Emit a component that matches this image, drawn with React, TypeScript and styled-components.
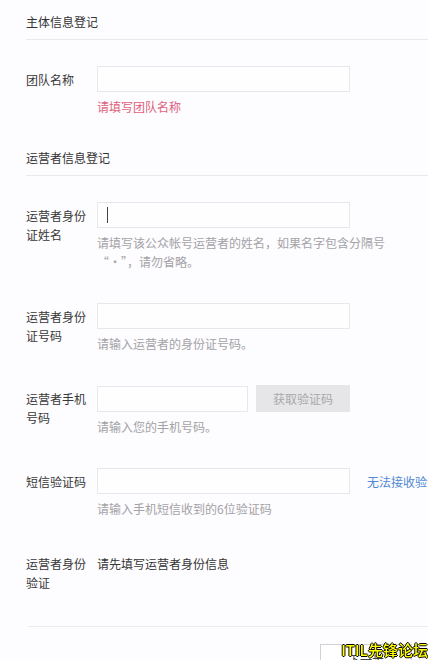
import React from "react";
import styled, { createGlobalStyle } from "styled-components";

const Global = createGlobalStyle`
  html, body {
    margin: 0;
    padding: 0;
    background: #fdfcfe;
    overflow: hidden;
  }
  body {
    font-family: "Noto Sans CJK SC", "Noto Sans", sans-serif;
    font-size: 12px;
    color: #353535;
  }
`;

const Page = styled.div`
  width: 428px;
  padding: 12px 0 0 26px;
  box-sizing: border-box;
`;

const Section = styled.section<{ $gap?: number }>`
  margin-top: ${(p) => p.$gap ?? 0}px;
`;

const Heading = styled.div`
  line-height: 20px;
  padding-bottom: 7px;
  border-bottom: 1px solid #e9e8ec;
  color: #333;
  margin-right: -30px;
`;

const Rows = styled.div`
  display: flex;
  flex-direction: column;
  gap: 32px;
  padding-top: 26px;
`;

const Row = styled.div`
  display: flex;
  align-items: flex-start;
`;

const Label = styled.div`
  flex: 0 0 62px;
  margin-right: 9px;
  line-height: 19px;
  padding-top: 3.5px;
  color: #383838;
`;

const Field = styled.div`
  display: flex;
  flex-direction: column;
`;

const Controls = styled.div`
  display: flex;
  align-items: center;
  white-space: nowrap;
`;

const InputBox = styled.div<{ $w?: number }>`
  box-sizing: border-box;
  width: ${(p) => p.$w ?? 253}px;
  height: 26px;
  border: 1px solid #e8e7ec;
  background: #fefefe;
  display: flex;
  align-items: center;
  padding: 0 9px;
`;

const Caret = styled.span`
  display: block;
  width: 1px;
  height: 16px;
  background: #444;
`;

const CodeButton = styled.div`
  box-sizing: border-box;
  width: 94px;
  height: 27px;
  margin-left: 8px;
  background: #e6e5e8;
  color: #a9a9ab;
  display: flex;
  align-items: center;
  justify-content: center;
`;

const Link = styled.span`
  margin-left: 17px;
  color: #5089d5;
`;

const Hint = styled.div<{ $error?: boolean }>`
  margin-top: 5px;
  max-width: 290px;
  line-height: 19px;
  color: ${(p) => (p.$error ? "#e0617c" : "#a3a2a6")};
`;

const Value = styled.div`
  line-height: 19px;
  padding-top: 3.5px;
  color: #353535;
`;

const Divider = styled.div`
  margin-top: 34px;
  margin-left: 2px;
  margin-right: -30px;
  border-top: 1px solid #ebeaee;
`;

const Footer = styled.div`
  display: flex;
  justify-content: flex-end;
  padding: 17px 16px 0 0;
`;

const NextButton = styled.div`
  box-sizing: border-box;
  width: 92px;
  height: 32px;
  border: 1px solid #d2d2d4;
  background: #fff;
  color: #444;
  display: flex;
  align-items: center;
  justify-content: center;
  font-size: 12px;
`;

const Watermark = styled.div`
  position: fixed;
  right: 0;
  bottom: 2px;
  font-family: "Noto Sans CJK SC", sans-serif;
  font-size: 15px;
  line-height: 16px;
  font-weight: 500;
  color: #ffff00;
  text-shadow: 1px 0 0 #000, -1px 0 0 #000, 0 1px 0 #000, 0 -1px 0 #000;
  white-space: nowrap;
`;

export default function App() {
  return (
    <>
      <Global />
      <Page lang="zh-CN">
        <Section>
          <Heading>主体信息登记</Heading>
          <Rows>
            <Row>
              <Label>团队名称</Label>
              <Field>
                <InputBox />
                <Hint $error>请填写团队名称</Hint>
              </Field>
            </Row>
          </Rows>
        </Section>

        <Section $gap={32}>
          <Heading>运营者信息登记</Heading>
          <Rows>
            <Row>
              <Label>运营者身份证姓名</Label>
              <Field>
                <InputBox>
                  <Caret />
                </InputBox>
                <Hint>请填写该公众帐号运营者的姓名，如果名字包含分隔号“·”，请勿省略。</Hint>
              </Field>
            </Row>
            <Row>
              <Label>运营者身份证号码</Label>
              <Field>
                <InputBox />
                <Hint>请输入运营者的身份证号码。</Hint>
              </Field>
            </Row>
            <Row>
              <Label>运营者手机号码</Label>
              <Field>
                <Controls>
                  <InputBox $w={151} />
                  <CodeButton>获取验证码</CodeButton>
                </Controls>
                <Hint>请输入您的手机号码。</Hint>
              </Field>
            </Row>
            <Row>
              <Label>短信验证码</Label>
              <Field>
                <Controls>
                  <InputBox />
                  <Link>无法接收验证码？</Link>
                </Controls>
                <Hint>请输入手机短信收到的6位验证码</Hint>
              </Field>
            </Row>
            <Row>
              <Label>运营者身份验证</Label>
              <Value>请先填写运营者身份信息</Value>
            </Row>
          </Rows>
        </Section>

        <Divider />
        <Footer>
          <NextButton>下一步</NextButton>
        </Footer>
      </Page>
      <Watermark>ITIL先锋论坛</Watermark>
    </>
  );
}
